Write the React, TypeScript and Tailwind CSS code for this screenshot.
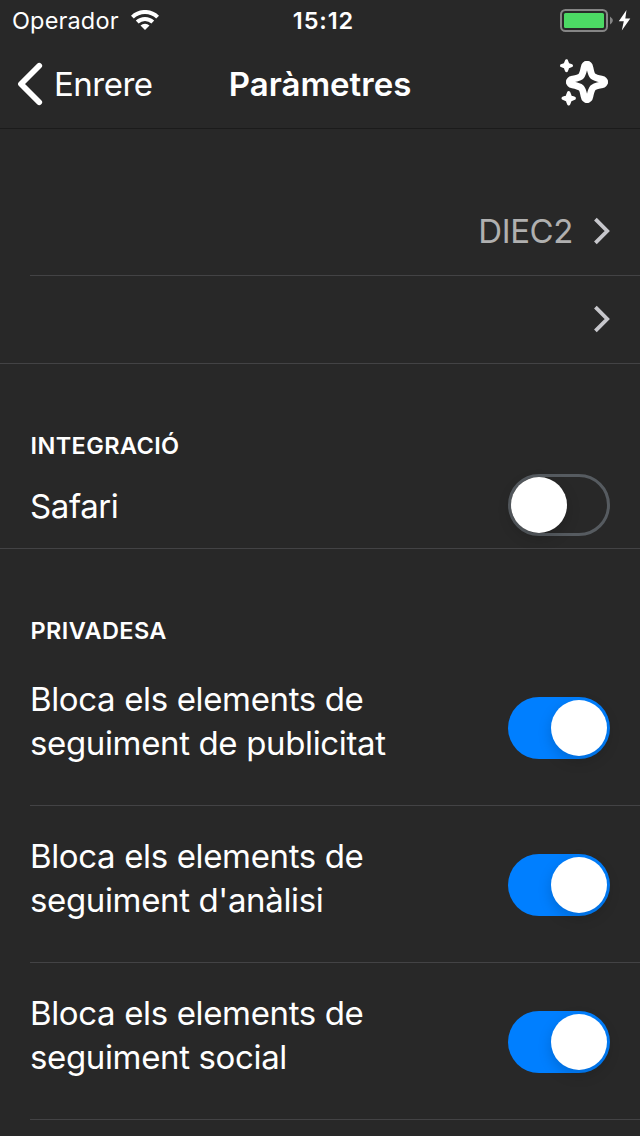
import React from "react";

function Toggle({ on }: { on?: boolean }) {
  return (
    <span
      role="switch"
      aria-checked={!!on}
      className={
        on
          ? "mt-px flex h-[62px] w-[102px] shrink-0 items-center justify-end rounded-full bg-[#007fff] px-[3px]"
          : "mb-px flex h-[62px] w-[102px] shrink-0 items-center justify-start rounded-full border-[3px] border-[#565b60]"
      }
    >
      <span className="h-14 w-14 rounded-full bg-white shadow-[0_5px_14px_rgba(0,0,0,0.17)]" />
    </span>
  );
}

function Chevron() {
  return (
    <svg className="mb-0.5" width="18" height="28" viewBox="0 0 18 28" fill="none" stroke="#c7c7cc" strokeWidth="3.8">
      <path d="M2.4 2.2 14.2 14 2.4 25.8" />
    </svg>
  );
}

const STAR_SIDE = "M31 10.5c1.700 0 2.500 1.100 2.900 3.100.9 4.500 1.400 7.200 3 8.500s4 2.100 8.500 3c2 .4 3.100 1.200 3.100 2.900";

function Sparkles() {
  return (
    <svg className="-mt-[5px]" width="56" height="56" viewBox="0 0 56 56">
      <g fill="none" stroke="white" strokeWidth="6.800" strokeLinecap="round" strokeLinejoin="round">
        <path d={STAR_SIDE} />
        <path d={STAR_SIDE} transform="rotate(90 31 28)" />
        <path d={STAR_SIDE} transform="rotate(180 31 28)" />
        <path d={STAR_SIDE} transform="rotate(270 31 28)" />
      </g>
      <g fill="white" stroke="white" strokeLinejoin="round">
        <path d="M10.500 6.700L11.900 10.300 15.500 11.700 11.900 13.100 10.500 16.700 9.100 13.100 5.500 11.700 9.100 10.300Z" strokeWidth="3" />
        <path d="M12.700 38.700L14.300 42.700 18.300 44.300 14.300 45.900 12.700 49.900 11.100 45.900 7.100 44.300 11.100 42.700Z" strokeWidth="3.2" />
      </g>
    </svg>
  );
}

function SectionTitle({ children }: { children: string }) {
  return (
    <h2 className="flex h-[34px] items-center pl-[30.500px] text-[23.5px] font-semibold leading-[34px] tracking-[0.4px]">
      {children}
    </h2>
  );
}

function BlockRow({ first, second }: { first: string; second: string }) {
  return (
    <div className="ml-[30px] flex h-[157px] items-center justify-between border-b border-[#434345] pr-[30px]">
      <p className="-mt-[13px] text-[33px] leading-[44px] tracking-[-0.36px]">
        {first}
        <br />
        {second}
      </p>
      <Toggle on />
    </div>
  );
}

export default function App() {
  return (
    <div className="h-[1136px] w-[640px] overflow-hidden bg-[#282828] font-['Inter',sans-serif] text-white">
      <div className="grid h-10 grid-cols-3 items-center">
        <div className="flex items-center gap-3 pl-3 text-[23.5px] leading-[38px]">
          <span className="pt-0.5 tracking-[0.15px]">Operador</span>
          <svg width="28" height="20" viewBox="0 0 28 20" fill="none" stroke="white" strokeWidth="4">
            <path d="M1.4 7.1a18 18 0 0 1 25.2 0" />
            <path d="M6.2 12a11.3 11.3 0 0 1 15.6 0" />
            <path d="M14 20 9.5 15.5a6.4 6.4 0 0 1 9 0Z" fill="white" stroke="none" />
          </svg>
        </div>
        <div className="pl-[7px] pt-0.5 text-center text-[23.5px] font-semibold tracking-[0.9px]">15:12</div>
        <div className="flex justify-end pr-2">
          <svg width="72" height="24" viewBox="0 0 72 24">
            <rect x="1" y="2" width="46" height="21" rx="4.5" fill="none" stroke="#858585" strokeWidth="2" />
            <rect x="4" y="5" width="40" height="15" rx="1.5" fill="#4cd964" />
            <path d="M50 8.500q5.500 4 0 8Z" fill="#858585" />
            <path d="M66.500 2 58.800 13.200h5L61.800 22.400 70.300 10.600h-5Z" fill="white" />
          </svg>
        </div>
      </div>
      <header className="grid h-[89px] grid-cols-3 items-center border-b border-[#1b1b1b]">
        <div className="flex items-center gap-[11px] pl-[17px]">
          <svg width="26" height="44" viewBox="0 0 26 44" fill="none" stroke="white" strokeWidth="5.8" strokeLinecap="round" strokeLinejoin="round">
            <path d="M22.2 3.8 4 22l18.2 18.2" />
          </svg>
          <span className="text-[33px] leading-10 tracking-[-0.5px]">Enrere</span>
        </div>
        <h1 className="text-center text-[33px] font-semibold leading-10">Paràmetres</h1>
        <div className="flex justify-end pr-7">
          <Sparkles />
        </div>
      </header>
      <main>
        <div className="mt-[59px] ml-[30px] flex h-[88px] items-center justify-end gap-5 border-b border-[#434345] pr-[29px]">
          <span className="text-[33px] tracking-[-0.4px] text-[#b0b0b0]">DIEC2</span>
          <Chevron />
        </div>
        <div className="flex h-[88px] items-center justify-end border-b border-[#434345] pr-[29px]">
          <Chevron />
        </div>
        <section className="pt-[65px]">
          <SectionTitle>INTEGRACIÓ</SectionTitle>
          <div className="flex h-[86px] items-center justify-between border-b border-[#434345] px-[30px] text-[33px]">
            <span className="pt-0.5 tracking-[-0.4px]">Safari</span>
            <Toggle />
          </div>
        </section>
        <section className="pt-[65px]">
          <SectionTitle>PRIVADESA</SectionTitle>
          <div className="pt-px">
            <BlockRow first="Bloca els elements de" second="seguiment de publicitat" />
            <BlockRow first="Bloca els elements de" second="seguiment d'anàlisi" />
            <BlockRow first="Bloca els elements de" second="seguiment social" />
          </div>
        </section>
      </main>
    </div>
  );
}
